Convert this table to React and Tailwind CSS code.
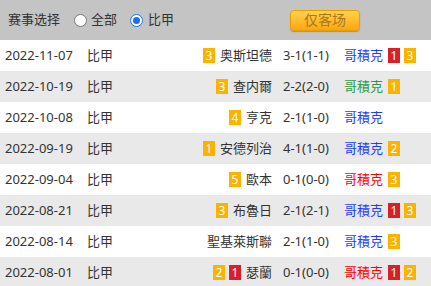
import React from "react";

const matches = [
  { date: "2022-11-07", home: "奥斯坦德", hb: [["y", 3]], score: "3-1(1-1)", away: "哥積克", color: "text-[#1f3dff]", ab: [["r", 1], ["y", 3]] },
  { date: "2022-10-19", home: "查内爾", hb: [["y", 3]], score: "2-2(2-0)", away: "哥積克", color: "text-[#2e9a48]", ab: [["y", 1]] },
  { date: "2022-10-08", home: "亨克", hb: [["y", 4]], score: "2-1(1-0)", away: "哥積克", color: "text-[#1f3dff]", ab: [] },
  { date: "2022-09-19", home: "安德列治", hb: [["y", 1]], score: "4-1(1-0)", away: "哥積克", color: "text-[#1f3dff]", ab: [["y", 2]] },
  { date: "2022-09-04", home: "歐本", hb: [["y", 5]], score: "0-1(0-0)", away: "哥積克", color: "text-[#ff0000]", ab: [["y", 3]] },
  { date: "2022-08-21", home: "布魯日", hb: [["y", 3]], score: "2-1(2-1)", away: "哥積克", color: "text-[#1f3dff]", ab: [["r", 1], ["y", 3]] },
  { date: "2022-08-14", home: "聖基萊斯聯", hb: [], score: "2-1(1-0)", away: "哥積克", color: "text-[#1f3dff]", ab: [["y", 3]] },
  { date: "2022-08-01", home: "瑟蘭", hb: [["y", 2], ["r", 1]], score: "0-1(0-0)", away: "哥積克", color: "text-[#ff0000]", ab: [["r", 1], ["y", 2]] },
];

function Badge({ kind, n }) {
  return (
    <span
      className={`inline-flex h-[15px] w-[12px] items-center justify-center text-[12px] leading-none text-white ${
        kind === "r" ? "bg-[#d8202a]" : "bg-[#fbb300]"
      }`}
    >
      {n}
    </span>
  );
}

function Radio({ checked }) {
  return (
    <span
      className={`inline-flex h-[13px] w-[13px] items-center justify-center rounded-full border bg-white ${
        checked ? "border-[#1a73e8]" : "border-[#777]"
      }`}
    >
      {checked && <span className="h-[7px] w-[7px] rounded-full bg-[#1a73e8]" />}
    </span>
  );
}

export default function App() {
  return (
    <div className="w-[431px] h-[286px] overflow-hidden bg-white text-[13px] text-[#333] font-['Noto_Sans','Noto_Sans_CJK_SC',sans-serif]">
      <div className="flex h-[40px] items-center bg-[#c4c4c4] pl-[8px] text-[13px] text-[#333]">
        <span className="w-[52px]">赛事选择</span>
        <label className="ml-[14px] flex items-center gap-[4px]">
          <Radio />
          <span className="w-[26px]">全部</span>
        </label>
        <label className="ml-[13px] flex items-center gap-[5px]">
          <Radio checked />
          <span className="w-[26px]">比甲</span>
        </label>
        <button className="ml-[116px] h-[21px] w-[70px] rounded-[4px] border border-[#e8a000] bg-gradient-to-b from-[#ffd24a] to-[#ffa500] text-[14px] leading-none text-[#a8781a] shadow-[0_1px_1px_rgba(0,0,0,0.25)]">
          仅客场
        </button>
      </div>
      {matches.map((m, i) => (
        <div
          key={m.date}
          className={`flex h-[31px] items-center whitespace-nowrap pl-[5px] ${i % 2 ? "bg-[#e9e9e9]" : "bg-white"}`}
        >
          <span className="w-[82px]">{m.date}</span>
          <span className="w-[40px]">比甲</span>
          <div className="flex w-[145px] items-center justify-end gap-[4px]">
            {m.hb.map(([k, n], j) => (
              <Badge key={j} kind={k} n={n} />
            ))}
            <span className="ml-[1px]">{m.home}</span>
          </div>
          <span className="ml-[11px] w-[50px]">{m.score}</span>
          <div className="ml-[11px] flex items-center gap-[4px]">
            <span className={`${m.color} mr-[1px]`}>{m.away}</span>
            {m.ab.map(([k, n], j) => (
              <Badge key={j} kind={k} n={n} />
            ))}
          </div>
        </div>
      ))}
    </div>
  );
}
